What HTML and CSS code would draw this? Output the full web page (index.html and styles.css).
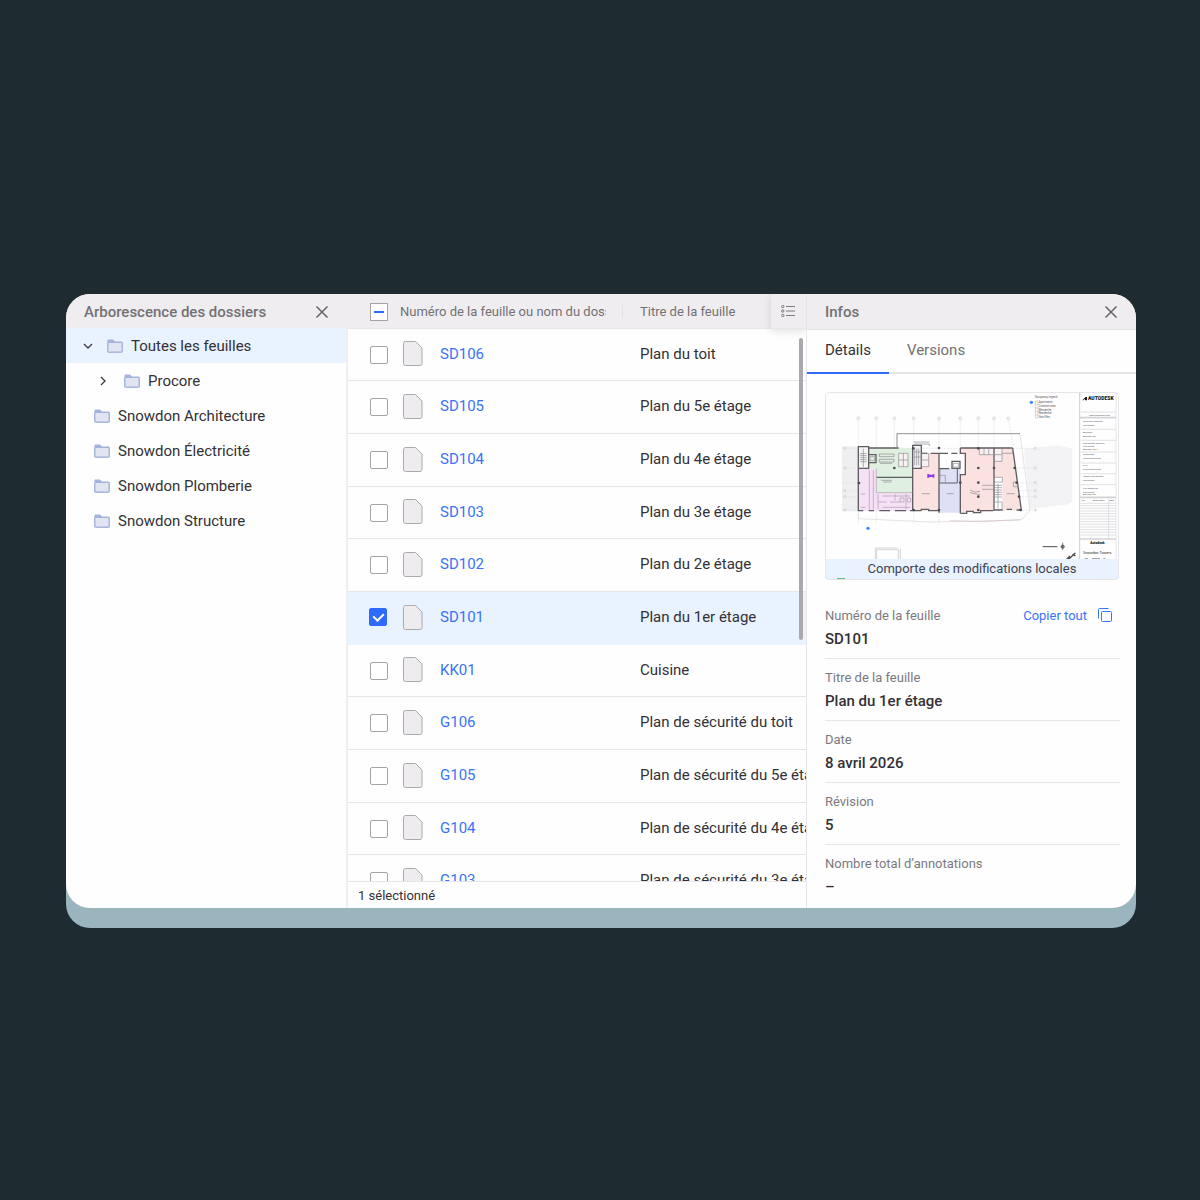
FILE: index.html
```html
<!DOCTYPE html>
<html lang="fr">
<head>
<meta charset="utf-8">
<meta name="viewport" content="width=device-width, initial-scale=1">
<title>Feuilles</title>
<link rel="stylesheet" href="styles.css">
</head>
<body>
<svg class="defs" aria-hidden="true">
  <symbol id="folder" viewBox="0 0 16 14">
    <path d="M.5 13V1.500Q.5.5 1.500.5H6L8 2.500H14.500Q15.500 2.500 15.500 3.500V13Z" fill="#a3b3dc"/>
    <path d="M1.500 4H14.500V12.500H1.500Z" fill="#e1e5f1"/>
    <path d="M.5 3.500V12.500Q.5 13.500 1.500 13.500H14.500Q15.500 13.500 15.500 12.500V3.500" fill="none" stroke="#a9b8df"/>
  </symbol>
  <symbol id="sheet" viewBox="0 0 20 25">
    <path d="M2.500.5H12.500L19 7V22.500Q19 24.500 17 24.500H2.500Q.5 24.500.5 22.500V2.500Q.5.5 2.500.5Z" fill="#eeecef" stroke="#aaa9ad"/>
  </symbol>
  <symbol id="close" viewBox="0 0 14 14">
    <path d="M1.500 1.500L12.500 12.500M12.500 1.500L1.500 12.500" fill="none" stroke="#656368" stroke-width="1.500"/>
  </symbol>
</svg>

<main class="window">
  <section class="tree-panel">
    <header class="panel-head">
      <h2>Arborescence des dossiers</h2>
      <button class="icon-btn" type="button" aria-label="Fermer l’arborescence"><svg width="14" height="14"><use href="#close"/></svg></button>
    </header>
    <ul class="tree">
      <li class="node root selected">
        <svg class="chevron" width="10" height="10" viewBox="0 0 10 10"><path d="M1 3L5 7L9 3"/></svg>
        <svg class="folder" width="16" height="14"><use href="#folder"/></svg>Toutes les feuilles</li>
      <li class="node child">
        <svg class="chevron" width="10" height="10" viewBox="0 0 10 10"><path d="M3 1L7 5L3 9"/></svg>
        <svg class="folder" width="16" height="14"><use href="#folder"/></svg>Procore</li>
      <li class="node leaf"><svg class="folder" width="16" height="14"><use href="#folder"/></svg>Snowdon Architecture</li>
      <li class="node leaf"><svg class="folder" width="16" height="14"><use href="#folder"/></svg>Snowdon Électricité</li>
      <li class="node leaf"><svg class="folder" width="16" height="14"><use href="#folder"/></svg>Snowdon Plomberie</li>
      <li class="node leaf"><svg class="folder" width="16" height="14"><use href="#folder"/></svg>Snowdon Structure</li>
    </ul>
  </section>

  <section class="list-panel">
    <div class="list-scroll">
      <table class="sheets">
        <colgroup><col class="c-check"><col class="c-name"><col><col class="c-menu"></colgroup>
        <thead>
          <tr>
            <th class="check"><input class="mixed" type="checkbox" aria-label="Tout sélectionner" aria-checked="mixed"></th>
            <th class="h-name"><div class="clip">Numéro de la feuille ou nom du dossier</div></th>
            <th class="title">Titre de la feuille</th>
            <th class="menu"><button class="icon-btn" type="button" aria-label="Colonnes"><svg width="14" height="12" viewBox="0 0 14 12" fill="none" stroke="#7b797e"><path d="M5 1.500H14M5 6H14M5 10.500H14"/><circle cx="1.800" cy="1.500" r="1.200"/><circle cx="1.800" cy="6" r="1.200"/><circle cx="1.800" cy="10.500" r="1.200"/></svg></button></th>
          </tr>
        </thead>
        <tbody>
          <tr><td class="check"><input type="checkbox" aria-label="SD106"></td><td class="name"><a href="#SD106"><svg width="20" height="25"><use href="#sheet"/></svg>SD106</a></td><td class="title" colspan="2">Plan du toit</td></tr>
          <tr><td class="check"><input type="checkbox" aria-label="SD105"></td><td class="name"><a href="#SD105"><svg width="20" height="25"><use href="#sheet"/></svg>SD105</a></td><td class="title" colspan="2">Plan du 5e étage</td></tr>
          <tr><td class="check"><input type="checkbox" aria-label="SD104"></td><td class="name"><a href="#SD104"><svg width="20" height="25"><use href="#sheet"/></svg>SD104</a></td><td class="title" colspan="2">Plan du 4e étage</td></tr>
          <tr><td class="check"><input type="checkbox" aria-label="SD103"></td><td class="name"><a href="#SD103"><svg width="20" height="25"><use href="#sheet"/></svg>SD103</a></td><td class="title" colspan="2">Plan du 3e étage</td></tr>
          <tr><td class="check"><input type="checkbox" aria-label="SD102"></td><td class="name"><a href="#SD102"><svg width="20" height="25"><use href="#sheet"/></svg>SD102</a></td><td class="title" colspan="2">Plan du 2e étage</td></tr>
          <tr class="selected"><td class="check"><input type="checkbox" aria-label="SD101" checked></td><td class="name"><a href="#SD101"><svg width="20" height="25"><use href="#sheet"/></svg>SD101</a></td><td class="title" colspan="2">Plan du 1er étage</td></tr>
          <tr><td class="check"><input type="checkbox" aria-label="KK01"></td><td class="name"><a href="#KK01"><svg width="20" height="25"><use href="#sheet"/></svg>KK01</a></td><td class="title" colspan="2">Cuisine</td></tr>
          <tr><td class="check"><input type="checkbox" aria-label="G106"></td><td class="name"><a href="#G106"><svg width="20" height="25"><use href="#sheet"/></svg>G106</a></td><td class="title" colspan="2">Plan de sécurité du toit</td></tr>
          <tr><td class="check"><input type="checkbox" aria-label="G105"></td><td class="name"><a href="#G105"><svg width="20" height="25"><use href="#sheet"/></svg>G105</a></td><td class="title" colspan="2">Plan de sécurité du 5e étage</td></tr>
          <tr><td class="check"><input type="checkbox" aria-label="G104"></td><td class="name"><a href="#G104"><svg width="20" height="25"><use href="#sheet"/></svg>G104</a></td><td class="title" colspan="2">Plan de sécurité du 4e étage</td></tr>
          <tr><td class="check"><input type="checkbox" aria-label="G103"></td><td class="name"><a href="#G103"><svg width="20" height="25"><use href="#sheet"/></svg>G103</a></td><td class="title" colspan="2">Plan de sécurité du 3e étage</td></tr>
        </tbody>
      </table>
      <div class="scrollbar"></div>
    </div>
    <footer class="status">1 sélectionné</footer>
  </section>

  <section class="info-panel">
    <header class="panel-head">
      <h2>Infos</h2>
      <button class="icon-btn" type="button" aria-label="Fermer les infos"><svg width="14" height="14"><use href="#close"/></svg></button>
    </header>
    <nav class="tabs" role="tablist">
      <button class="tab active" type="button" role="tab" aria-selected="true">Détails</button>
      <button class="tab" type="button" role="tab" aria-selected="false">Versions</button>
    </nav>
    <div class="details">
      <figure class="thumb">
        <svg class="plan" viewBox="15 20 882 564" aria-hidden="true">
          <defs>
            <pattern id="hatch" width="8" height="8" patternUnits="userSpaceOnUse" patternTransform="rotate(45)"><path d="M0 0V8" stroke="#e2e1e6" stroke-width="2"/></pattern>
          </defs>
          <!-- surrounding ground -->
          <path d="M66 183H114V378H66Z" fill="#efeff1"/>
          <path d="M612 190L716 180L756 190V350L740 358L630 370Z" fill="#f5f5f7"/>
          <path d="M612 190L716 180L756 190V350L740 358L630 370Z" fill="url(#hatch)"/>
          <!-- grid axes -->
          <g stroke="#e0e0e4" stroke-width="2" stroke-dasharray="6 3">
            <path d="M115 105V415M169 105V415M223 105V200M281 105V415M357 105V415M421 105V385M475 105V385M522 105V375M566 105L580 185"/>
            <path d="M66 189H640M66 248H640M66 292H640M66 316H640M66 334H640M66 374H640"/>
          </g>
          <g fill="#fff" stroke="#c0c0c6" stroke-width="2">
            <circle cx="115" cy="99" r="4"/><circle cx="169" cy="99" r="4"/><circle cx="223" cy="99" r="4"/><circle cx="281" cy="99" r="4"/><circle cx="357" cy="99" r="4"/><circle cx="421" cy="99" r="4"/><circle cx="475" cy="99" r="4"/><circle cx="522" cy="99" r="4"/><circle cx="565" cy="99" r="4"/>
            <circle cx="646" cy="189" r="3"/><circle cx="646" cy="248" r="3"/><circle cx="646" cy="292" r="3"/><circle cx="646" cy="316" r="3"/><circle cx="646" cy="334" r="3"/><circle cx="646" cy="374" r="3"/>
            <circle cx="75" cy="189" r="3"/><circle cx="75" cy="248" r="3"/><circle cx="75" cy="316" r="3"/><circle cx="75" cy="334" r="3"/><circle cx="75" cy="374" r="3"/>
          </g>
          <!-- site outline -->
          <path d="M231 186V145H600L630 374L604 404L330 410L115 400V380" fill="none" stroke="#d6d6da" stroke-width="2"/>
          <path d="M231 186V145H600" fill="none" stroke="#98989e" stroke-width="3"/>
          <path d="M390 406L480 409L602 403" fill="none" stroke="#d3b9b9" stroke-width="2"/>
          <!-- rooms -->
          <path d="M115 249H169V322H278V376H115Z" fill="#f5e0f6"/>
          <path d="M146 188H278V322H169V249H146Z" fill="#e0f0e0"/>
          <path d="M278 248H304V204H357V376H278Z" fill="#fae2e0"/>
          <path d="M357 250H421V382H357Z" fill="#dee1f6"/>
          <path d="M421 188H578L604 374L520 376L421 382V268H436V204H421Z" fill="#fae2e0"/>
          <path d="M357 204H436V250H357Z" fill="#fff"/>
          <path d="M520 276H547V376H520Z" fill="#fff"/>
          <path d="M115 184H146V249H115ZM278 180H304V249H278Z" fill="#f4f4f4"/>
          <path d="M478 188H520V208H478ZM522 188H546V228H522ZM236 204H264V244H236ZM304 204H326V244H304Z" fill="#f7f2f1"/>
          <!-- walls -->
          <g fill="none" stroke="#5f5d62" stroke-width="4">
            <path d="M115 184H146V249H115ZM146 188H236M146 208H168V232H146M115 249V376H130M146 376H162M178 376H210M225 376H258M270 376H304"/>
            <path d="M278 180H304V249H278ZM278 180V376M169 276H278"/>
            <path d="M304 204H322M332 204H357V382M304 376L304 372H326V376H357M357 204H384M394 204H412M396 228H420V249H396ZM357 250H388M421 188V204H436V268H421V384M421 188H578M578 188L604 374M421 384H440V378H460V382H482V376H520M522 188V376M604 374H590M576 372H560M548 374H520"/>
            <path d="M357 293H412V250" stroke-width="3"/>
          </g>
          <g fill="none" stroke="#8b898f" stroke-width="2">
            <path d="M120 205H140M120 211H140M120 217H140M120 223H140M120 229H140M130 190V245M150 214H164V226H150Z"/>
            <path d="M284 190V240M290 190V240M296 190V240M282 200H302M282 215H302M282 170H328M282 176H328V182"/>
            <path d="M178 206H222V214H178ZM178 222H222V230H178ZM180 234H216M183 285H216M190 290H214M236 204H264V244H236ZM236 224H264M250 204V244M304 204H326V244H304ZM304 224H326M400 234H416V245H400Z"/>
            <path d="M169 249V322M169 322H278M188 332H270M174 350H200M210 350H240M188 366H270M122 326H136M122 366H136M174 326V372M258 326V372M225 326V345M240 338H252V350H240ZM262 338H272V350H262ZM148 255V372M160 255V372" stroke="#a79fab"/>
            <path d="M478 188V208H520M492 188V208M506 188V208M522 208H546V188M522 228H546V208M546 204H578V190"/>
            <path d="M522 276H547V290H522M524 300H546M524 307H546M524 314H546M524 321H546M524 328H546M524 335H546M534 295V370M522 350H546V374M486 300H520M486 312H520M580 290H592V304H580Z"/>
            <path d="M357 270H376V290M360 250V290M306 325H330M380 325H402M450 314Q462 324 480 318M450 322L480 328M560 325H584"/>
            <path d="M166 522V488H232M170 522V493H235V522M241 522V490" stroke="#c0c0c5"/>
          </g>
          <g fill="#4c4a4e">
            <circle cx="117" cy="293" r="4"/><circle cx="223" cy="248" r="4"/><circle cx="280" cy="189" r="4"/><circle cx="357" cy="188" r="4"/><circle cx="281" cy="374" r="4"/><circle cx="357" cy="374" r="4"/><circle cx="421" cy="292" r="4"/><circle cx="475" cy="189" r="4"/><circle cx="475" cy="248" r="4"/><circle cx="475" cy="292" r="4"/><circle cx="475" cy="334" r="4"/><circle cx="475" cy="374" r="4"/><circle cx="522" cy="248" r="4"/><circle cx="584" cy="248" r="4"/><circle cx="590" cy="292" r="4"/><circle cx="597" cy="334" r="4"/><circle cx="602" cy="374" r="4"/>
          </g>
          <path d="M322 265L334 269L343 265V278L334 274L322 278Z" fill="#8b39f2"/>
          <circle cx="144" cy="429" r="5" fill="#4285f4"/>
          <!-- legend -->
          <circle cx="634" cy="51" r="5" fill="#4285f4"/>
          <g class="micro" font-size="8"><text x="644" y="39" font-size="8">Occupancy Legend</text><text x="656" y="54">Apartments</text><text x="656" y="65">Common area</text><text x="656" y="76">Mercantile</text><text x="656" y="87">Residential</text><text x="656" y="98">Stair/Elev.</text></g>
          <path d="M646 47H654V98H646ZM646 57H654M646 68H654M646 79H654M646 89H654" fill="none" stroke="#c5bcc5" stroke-width="2"/>
          <!-- scale bar, north arrow -->
          <path d="M668 484H712" stroke="#4c4a4e" stroke-width="3"/><circle cx="728" cy="484" r="5" fill="#8b898e" stroke="#4c4a4e" stroke-width="2"/><path d="M728 472V494" stroke="#4c4a4e" stroke-width="2"/>
          <path d="M738 524L750 512M746 522L766 503M758 506L766 512" stroke="#4c4a4e" stroke-width="4"/>
          <!-- title block -->
          <path d="M779 20V584" stroke="#cfced4" stroke-width="3"/><path d="M888 20V584" stroke="#dddce2" stroke-width="2"/>
          <path d="M787 45L797 35H801V45H795V40L790 45Z" fill="#111"/>
          <text x="804" y="45" class="brand" font-size="15">AUTODESK</text>
          <g stroke="#d3d2d7" stroke-width="2"><path d="M782 80H888M782 132H888M782 165H888M782 200H888M782 233H888M782 265H888M782 298H888"/><path d="M780 97H888M780 336H888M780 461H888" stroke-width="5"/><path d="M782 354H888M782 361H888M782 369H888M782 377H888M782 385H888M782 393H888M782 401H888M782 409H888M782 417H888M782 425H888M782 433H888M782 441H888M782 449H888M866 340V458"/></g>
          <g class="micro" font-size="7"><text x="808" y="91">www.autodesk.com</text><text x="789" y="110">Structural Engineer</text><text x="789" y="121">Consultant</text><text x="789" y="144">Architect</text><text x="789" y="154">Address line</text><text x="789" y="176">Mechanical Engineer</text><text x="789" y="186">Consultant</text><text x="789" y="194">Address line 2</text><text x="789" y="210">Landscape</text><text x="789" y="220">Consultant group</text><text x="789" y="243">Civil</text><text x="789" y="254">Consultant group</text><text x="789" y="276">Interior architecture</text><text x="789" y="288">Consultant</text><text x="789" y="312">Fire protection</text><text x="789" y="322">Consultant</text><text x="789" y="330">Address line</text><text x="785" y="346">No.</text><text x="818" y="346">Description</text><text x="868" y="346">Date</text></g>
          <text x="832" y="476" class="brand mid" font-size="10">Autodesk</text>
          <text x="832" y="507" class="tower mid" font-size="11">Snowdon Towers</text>
          <path d="M794 521H804M816 521H840M850 521H856" stroke="#4c4a4e" stroke-width="3"/>
        </svg>
        <figcaption>Comporte des modifications locales</figcaption>
      </figure>
      <dl class="fields">
        <div class="field">
          <dt>Numéro de la feuille</dt><dd>SD101</dd>
          <button class="copy" type="button">Copier tout<svg width="14" height="14" viewBox="0 0 14 14" fill="none" stroke="#3a73f6"><path d="M.5 10.500V1.500Q.5.5 1.500.5H10.500"/><rect x="3.500" y="3.500" width="10" height="10" rx="1"/></svg></button>
        </div>
        <div class="field"><dt>Titre de la feuille</dt><dd>Plan du 1er étage</dd></div>
        <div class="field"><dt>Date</dt><dd>8 avril 2026</dd></div>
        <div class="field"><dt>Révision</dt><dd>5</dd></div>
        <div class="field"><dt>Nombre total d’annotations</dt><dd>–</dd></div>
      </dl>
    </div>
  </section>
</main>
</body>
</html>
```
FILE: styles.css
```css
* { box-sizing: border-box; }

body {
  margin: 0;
  min-height: 100vh;
  padding: 2px 64px 0 66px;
  display: flex;
  align-items: center;
  background: #1e2b30;
  color: #323035;
  font-family: Roboto, "Liberation Sans", sans-serif;
  font-size: 16px;
}

button { font: inherit; border: 0; background: none; padding: 0; cursor: pointer; }
svg { display: block; flex: none; }
.defs { position: absolute; width: 0; height: 0; }

.window {
  flex: 1;
  min-width: 0;
  display: grid;
  grid-template-columns: 282px minmax(0, 1fr) 329px;
  background: #fefefe;
  border-radius: 24px;
  overflow: hidden;
  box-shadow: 0 20px 0 #9ab5be;
}

.panel-head {
  display: flex;
  align-items: center;
  justify-content: space-between;
  background: #f0edf0;
  padding: 0 18px;
}
.panel-head h2 { margin: 0; font-size: 15px; font-weight: 500; line-height: 20px; color: #737175; }
.icon-btn { display: flex; align-items: center; justify-content: center; }

/* folder tree */
.tree-panel { border-right: 2px solid #efeff1; }
.tree-panel .panel-head { height: 35px; padding-right: 17px; }
.tree { list-style: none; margin: -1px 0 0; padding: 0; }
.node { display: flex; align-items: center; height: 35px; font-size: 15px; }
.node.selected { background: #e9f2ff; }
.chevron { fill: none; stroke: #3c3a3e; stroke-width: 1.3; }
.folder { margin-right: 8px; }
.node.root { padding-left: 17px; }
.node.root .chevron { margin-right: 14px; }
.node.child { padding-left: 32px; }
.node.child .chevron { margin-right: 16px; }
.node.leaf { padding-left: 28px; }

/* sheet list */
.list-panel { display: flex; flex-direction: column; border-right: 1px solid #e6e5e9; min-width: 0; }
.list-scroll { position: relative; flex: 1 1 0px; min-height: 0; overflow: hidden; }
.sheets { width: 100%; table-layout: fixed; border-collapse: separate; border-spacing: 0; }
.c-check { width: 52px; }
.c-name { width: 223px; }
.c-menu { width: 35px; }
.sheets th, .sheets td { padding: 0; text-align: left; border-bottom: 1px solid #e6e5e9; white-space: nowrap; overflow: hidden; }
.sheets th { height: 35px; padding-top: 1px; background: #f0edf0; font-size: 13px; font-weight: 400; color: #737175; }
.sheets td { height: 53px; padding-bottom: 2px; font-size: 15px; }
.sheets tbody tr:nth-child(3n+1) td { height: 52px; }
.sheets tbody .selected td { background: #e9f2ff; border-color: #e9f2ff; }
.sheets .check { padding-left: 22px; }
.sheets td.check { padding-bottom: 0; }
.sheets .selected .check { padding: 0 0 2px 21px; }
.sheets .title { padding-left: 17px; }
.clip { width: 206px; overflow: hidden; }
.sheets .h-name { background: linear-gradient(#e4e2e6, #e4e2e6) right center / 1px 14px no-repeat #f0edf0; }
.sheets .menu { padding: 0; overflow: visible; box-shadow: 0 2px 8px #00000020; clip-path: inset(0 0 -12px -12px); }
.menu .icon-btn { width: 34px; height: 32px; }
.name a { display: flex; align-items: center; gap: 17px; padding-left: 3px; color: #3a73f6; text-decoration: none; }

input[type="checkbox"] {
  appearance: none;
  display: block;
  width: 18px;
  height: 18px;
  margin: 0;
  border: 1px solid #a5a3a8;
  border-radius: 2px;
  background: #fff;
}
input[type="checkbox"]:checked {
  border-color: #2f6bfa;
  background: #2f6bfa;
  position: relative;
}
input[type="checkbox"]:checked::after {
  content: "";
  position: absolute;
  left: 5px;
  top: 2px;
  width: 5px;
  height: 8px;
  border: solid #fff;
  border-width: 0 2px 2px 0;
  transform: rotate(45deg);
}
input[type="checkbox"].mixed {
  border-radius: 0;
  background: linear-gradient(#2f6bfa, #2f6bfa) center / 10px 2px no-repeat #fff;
}

.scrollbar { position: absolute; right: 3px; top: 44px; width: 4px; height: 302px; border-radius: 2px; background: #aaa8ac; }
.status { height: 27px; padding-left: 10px; border-top: 1px solid #e6e5e9; font-size: 13px; line-height: 27px; }

/* info panel */
.info-panel .panel-head { height: 36px; border-bottom: 1px solid #e3e1e5; }
.tabs { display: flex; height: 44px; box-shadow: inset 0 -2px #e6e5e9; }
.tab { padding: 0 18px 2px; font-size: 15px; color: #737175; border-bottom: 2px solid transparent; }
.tab.active { color: #323035; border-color: #2f6bfa; }
.details { padding: 18px 16px 2px 18px; }
.thumb { position: relative; width: 294px; margin: 0 0 17px; border-radius: 4px; overflow: hidden; }
.thumb::after { content: ""; position: absolute; inset: 0; border: 1px solid #e6e6ea; border-radius: 4px; }
.plan { width: 100%; height: auto; }
.plan text { font-family: Roboto, sans-serif; }
.micro { fill: #55535a; }
.brand { font-weight: 900; fill: #111; }
.tower { fill: #222; }
.mid { text-anchor: middle; }
figcaption {
  position: absolute;
  inset: auto 0 0;
  height: 21px;
  line-height: 20px;
  font-size: 13px;
  text-align: center;
  color: #3d4350;
  background: linear-gradient(#56c07a, #56c07a) 12px 100% / 8px 2px no-repeat #e9f2fe;
}

.fields { margin: 0; }
.field { display: grid; grid-template-columns: 1fr auto; padding: 9px 0 5px; border-bottom: 1px solid #e6e5e9; }
.field:last-child { border-bottom: 0; }
dt { grid-area: 1 / 1; font-size: 13px; line-height: 20px; color: #7b797e; }
dd { grid-area: 2 / 1; margin: 0; font-size: 15px; font-weight: 500; line-height: 27px; }
.copy { grid-area: 1 / 2; display: flex; align-items: center; gap: 11px; padding: 0 8px 2px 0; font-size: 13px; color: #3a73f6; }
```
